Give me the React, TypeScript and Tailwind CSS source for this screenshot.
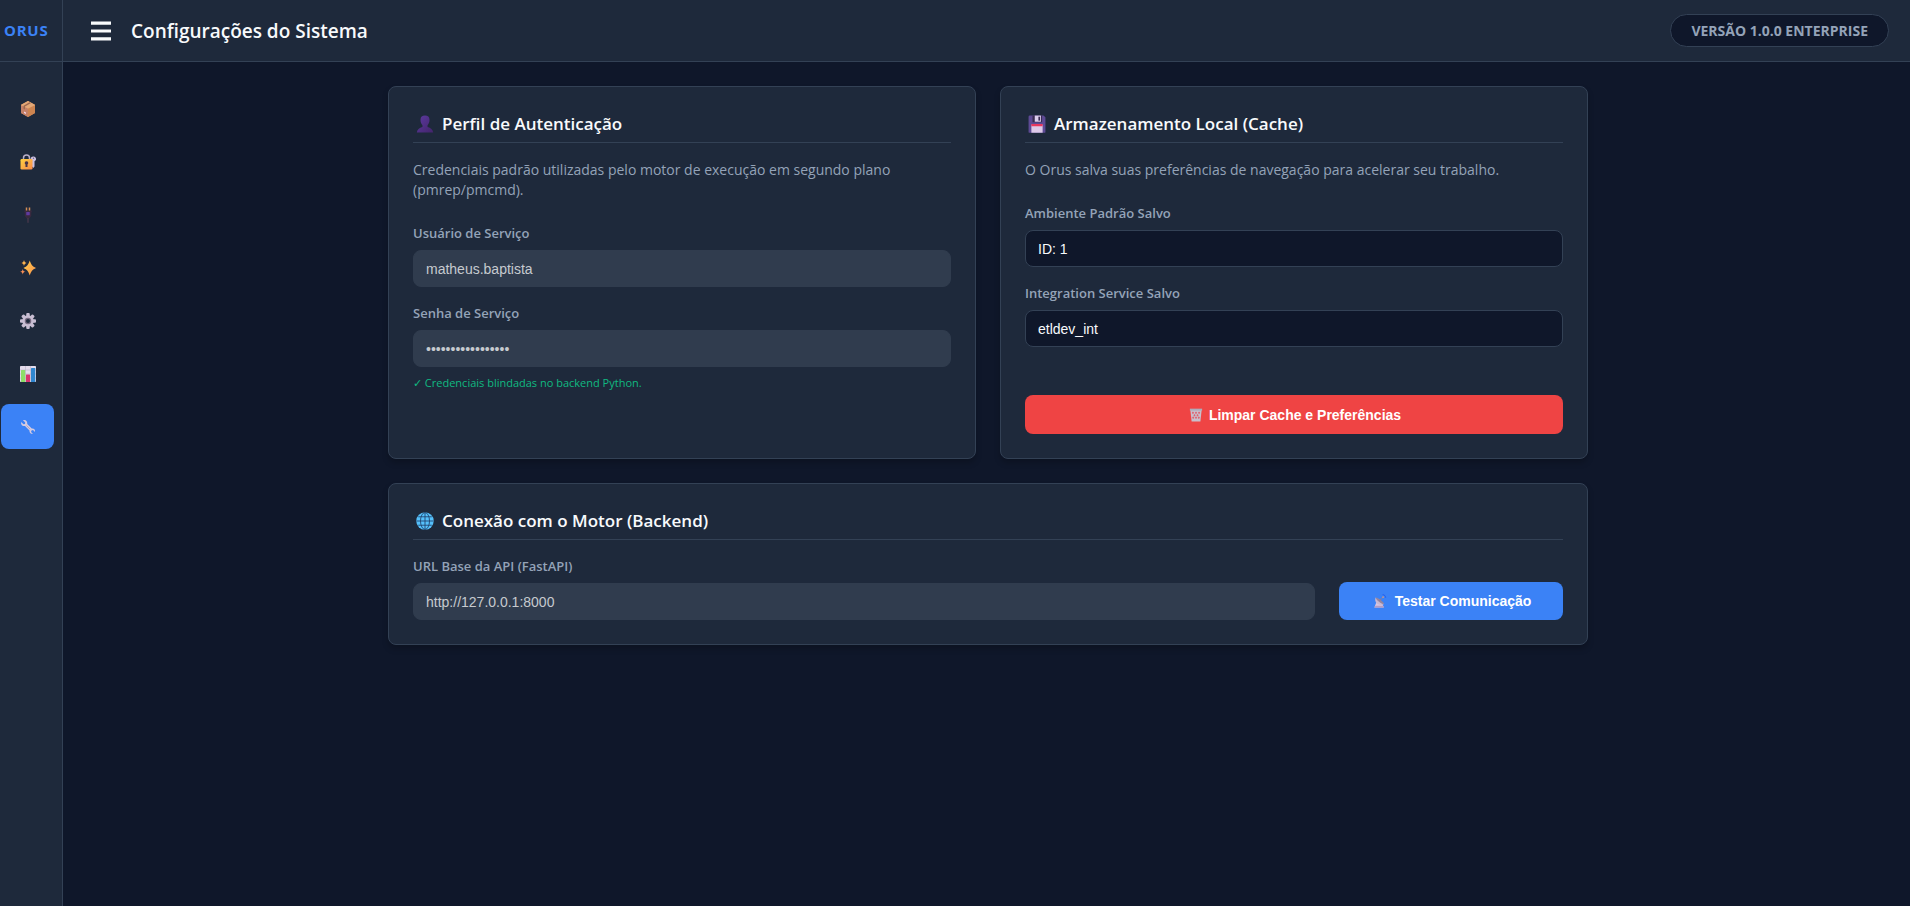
import type { ReactNode } from "react";

type IconProps = { className?: string };

function BoxIcon({ className }: IconProps) {
  return (
    <svg viewBox="0 0 32 32" className={className} aria-hidden="true">
      <path d="M16 0 30 7.500v16.500L16 32 2 24V7.500z" fill="#d9955f" />
      <path d="M2 8.500 16 15v17L2 24z" fill="#c48168" />
      <path d="M30 8.500 16 15v17l14-8z" fill="#cd8450" />
      <path d="M16 0 30 8 16 15 2 8z" fill="#e3a877" />
      <path d="m19 2.500 3 1.500-12 7v6l-3-1.500v-6z" fill="#9c6850" />
      <path d="m8 21 4 2v3l-4-2z" fill="#f3d5e6" />
    </svg>
  );
}

function LockKeyIcon({ className }: IconProps) {
  return (
    <svg viewBox="0 0 32 32" className={className} aria-hidden="true">
      <defs>
        <linearGradient id="lock-body" x1="0" y1="0" x2="1" y2="1">
          <stop offset="0" stopColor="#ffd23f" />
          <stop offset="1" stopColor="#f98a4b" />
        </linearGradient>
      </defs>
      <path d="M7 12V8a6 6 0 0 1 12 0v4" fill="none" stroke="#b8adc6" strokeWidth="3" />
      <path d="M26 5a5 5 0 0 1 3 9.500V25l-2.500 3-2.500-3V14.500A5 5 0 0 1 26 5z" fill="#c9bfe0" />
      <circle cx="27" cy="8.500" r="1.300" fill="#6b5d80" />
      <rect x="1" y="10" width="24" height="21" rx="2.500" fill="url(#lock-body)" />
      <path d="M13 14.500a3.500 3.500 0 0 1 2 6.400V26h-4v-5.100a3.500 3.500 0 0 1 2-6.400z" fill="#4a3548" />
    </svg>
  );
}

function PlugIcon({ className }: IconProps) {
  return (
    <svg viewBox="0 0 32 32" className={className} aria-hidden="true">
      <path d="M11.500 1h3v7h-3zM17.500 1h3v7h-3z" fill="#d08b56" />
      <path d="M8.500 7h15v3.500h-1V18l-4 5h-5l-4-5v-7.500h-1z" fill="#38293f" />
      <rect x="12.500" y="10" width="7" height="6.500" rx="1" fill="#5f3aa0" />
      <path d="M14.500 22h3v9.500h-3z" fill="#44364a" />
    </svg>
  );
}

function SparklesIcon({ className }: IconProps) {
  return (
    <svg viewBox="0 0 32 32" className={className} aria-hidden="true">
      <defs>
        <linearGradient id="spark" x1="0" y1="0" x2="1" y2="1">
          <stop offset="0" stopColor="#ffcf4a" />
          <stop offset="1" stopColor="#f9904d" />
        </linearGradient>
      </defs>
      <path d="M19.500 1c3 8.500 5 11.500 12.500 15-7.500 3.500-9.500 6.500-12.500 15C16.500 22.500 14.500 19.500 7 16c7.500-3.500 9.500-6.500 12.500-15z" fill="url(#spark)" />
      <path d="M8 0c1 4 2 5 5 6-3 1-4 2-5 6-1-4-2-5-5-6 3-1 4-2 5-6z" fill="#f9b04d" />
      <path d="M5.500 18c.9 3.700 1.800 4.600 5.500 5.500-3.700.9-4.600 1.800-5.500 5.500-.9-3.700-1.800-4.600-5.500-5.500 3.700-.9 4.600-1.800 5.500-5.500z" fill="#f98f57" />
    </svg>
  );
}

function GearIcon({ className }: IconProps) {
  return (
    <svg viewBox="0 0 32 32" className={className} aria-hidden="true">
      <g fill="#c8bdd2">
        <rect x="12.500" y="0" width="7" height="32" rx="2" />
        <rect x="12.500" y="0" width="7" height="32" rx="2" transform="rotate(45 16 16)" />
        <rect x="12.500" y="0" width="7" height="32" rx="2" transform="rotate(90 16 16)" />
        <rect x="12.500" y="0" width="7" height="32" rx="2" transform="rotate(135 16 16)" />
        <circle cx="16" cy="16" r="11.500" />
      </g>
      <circle cx="16" cy="16" r="6.500" fill="#75687f" />
      <circle cx="16" cy="16" r="4" fill="#1e293b" />
    </svg>
  );
}

function ChartIcon({ className }: IconProps) {
  return (
    <svg viewBox="0 0 32 32" className={className} aria-hidden="true">
      <rect x="0" y="0" width="32" height="32" rx="1.500" fill="#e4dcec" />
      <path d="M0 8h32M0 16h32M0 24h32M11 0v32M21 0v32" stroke="#b7abc4" strokeWidth="1" />
      <rect x="2" y="8" width="8.500" height="24" rx="1" fill="#8edc68" />
      <rect x="12" y="17" width="8" height="15" rx="1" fill="#d8336f" />
      <rect x="22" y="4" width="8.500" height="28" rx="1" fill="#2f86cf" />
    </svg>
  );
}

function WrenchIcon({ className }: IconProps) {
  return (
    <svg viewBox="0 0 32 32" className={className} aria-hidden="true">
      <path d="M6 2.500 10.500 7 10 10l-3 .5L2.500 6c-1.500 5 2.500 9 7.500 8l9 9c-.5 5 3.500 7.500 7 6.500L22 26l1-3 3-1 4 4c1-4-1.500-7.500-6.500-7l-9-9c1-5-3-9-8.500-7.500z" fill="#d6cbe0" />
      <path d="m13.500 13.500 6.500 6.500" stroke="#a79ab5" strokeWidth="1.500" strokeLinecap="round" />
    </svg>
  );
}

function UserIcon({ className }: IconProps) {
  return (
    <svg viewBox="0 0 32 32" className={className} aria-hidden="true">
      <defs>
        <linearGradient id="bust" x1="0" y1="0" x2="1" y2="1">
          <stop offset="0" stopColor="#5c3aa0" />
          <stop offset="1" stopColor="#43246b" />
        </linearGradient>
      </defs>
      <path d="M16 1c5 0 8 2.500 8 7.500 0 4-1 7.500-3.500 9.500v3.500C26 23 30 26 30.500 31h-29C2 26 6 23 11.500 21.500V18C9 16 8 12.500 8 8.500 8 3.500 11 1 16 1z" fill="url(#bust)" />
    </svg>
  );
}

function FloppyIcon({ className }: IconProps) {
  return (
    <svg viewBox="0 0 32 32" className={className} aria-hidden="true">
      <path d="M3 1h24.500L31 4v26a1.500 1.500 0 0 1-1.500 1.500h-27A1.500 1.500 0 0 1 1 30V3a2 2 0 0 1 2-2z" fill="#5d4a94" />
      <path d="M8 1h17v12H8z" fill="#382a50" />
      <path d="M12 1h11v11H12z" fill="#dccdec" />
      <path d="M18.500 3h3v7h-3z" fill="#382a50" />
      <path d="M6 17h20v14.500H6z" fill="#ddc9e8" />
      <path d="M6 16h20v4H6z" fill="#e8365e" />
    </svg>
  );
}

function GlobeIcon({ className }: IconProps) {
  return (
    <svg viewBox="0 0 32 32" className={className} aria-hidden="true">
      <circle cx="16" cy="16" r="15.500" fill="#55c0fb" />
      <g fill="none" stroke="#1f3f68" strokeWidth="1.500">
        <path d="M1 16h30M16 0.500v31M4 8.500h24M4 23.500h24" />
        <ellipse cx="16" cy="16" rx="8" ry="15" />
      </g>
    </svg>
  );
}

function TrashIcon({ className }: IconProps) {
  return (
    <svg viewBox="0 0 32 32" className={className} aria-hidden="true">
      <path d="M3 4h26l-3 27H6z" fill="#c9bfcc" />
      <g fill="#e0606c">
        <path d="m9 8 2.500 3L9 14l-2.500-3zM16 8l2.500 3-2.500 3-2.500-3zM23 8l2.500 3-2.500 3-2.500-3z" />
        <path d="m12.500 13.500 2.500 3-2.500 3-2.500-3zM19.500 13.500l2.500 3-2.500 3-2.500-3z" />
        <path d="m9.500 19 2.500 3-2.500 3L7 22zM16 19l2.500 3-2.500 3-2.500-3zM22.500 19l2.500 3-2.500 3-2.500-3z" />
      </g>
      <path d="M2 1.500h28v4.500H2z" fill="#aeacba" />
    </svg>
  );
}

function SatelliteIcon({ className }: IconProps) {
  return (
    <svg viewBox="0 0 32 32" className={className} aria-hidden="true">
      <path d="M8 18h11l6 13H3z" fill="#d6c6e2" />
      <path d="M6 27h17l2 4H3z" fill="#b49cc4" />
      <path d="M6 8c-3 7 1 16 11 17 4 .4 7-1 8-2z" fill="#c8b9d2" />
      <path d="M6 8c4-1 18 9 19 15-6 0-18-9-19-15z" fill="#94849e" />
      <path d="m14 16 9-9" stroke="#8c7b94" strokeWidth="2" />
      <circle cx="23" cy="7" r="2" fill="#d19a8a" />
      <path d="M22 1.500c4 0 7 3 7 7" fill="none" stroke="#2458e8" strokeWidth="2" />
    </svg>
  );
}

const navItems = [
  { label: "Pacotes", icon: BoxIcon, active: false },
  { label: "Credenciais", icon: LockKeyIcon, active: false },
  { label: "Conexões", icon: PlugIcon, active: false },
  { label: "Automação", icon: SparklesIcon, active: false },
  { label: "Execução", icon: GearIcon, active: false },
  { label: "Relatórios", icon: ChartIcon, active: false },
  { label: "Configurações", icon: WrenchIcon, active: true },
];

function Card({ title, icon, className = "", children }: { title: string; icon: ReactNode; className?: string; children: ReactNode }) {
  return (
    <section
      className={`flex flex-col rounded-lg border border-[#334155] bg-[#1e293b] p-6 shadow-[0_4px_6px_rgba(0,0,0,0.2)] ${className}`}
    >
      <h2 className="mb-[17px] flex items-center gap-2 border-b border-[#334155] pb-[5px] pl-[3px] text-[17px] leading-[26px] font-semibold text-slate-50">
        {icon}
        {title}
      </h2>
      {children}
    </section>
  );
}

function Field({ id, label, value, type = "text", locked = false }: { id: string; label: string; value: string; type?: string; locked?: boolean }) {
  return (
    <div>
      <label htmlFor={id} className="mb-2 block text-[13px] leading-[17px] font-semibold text-[#94a3b8]">
        {label}
      </label>
      <input
        id={id}
        type={type}
        defaultValue={value}
        readOnly
        className={`block h-[37px] w-full rounded-lg border px-3 font-['Liberation_Sans',Arial,sans-serif] text-sm outline-none ${
          locked ? "border-[#303c4e] bg-[#303c4e] text-[#c6cacf]" : "border-[#334155] bg-[#0f172a] text-slate-50"
        }`}
      />
    </div>
  );
}

export default function App() {
  return (
    <div className="flex min-h-screen bg-[#0f172a] font-['Open_Sans','Noto_Sans',sans-serif] text-slate-50">
      <aside className="flex w-[63px] shrink-0 flex-col border-r border-[#334155] bg-[#1e293b]">
        <div className="flex h-[62px] items-center border-b border-[#334155] pl-1 text-[15px] font-bold tracking-wider text-[#3b82f6]">
          ORUS
        </div>
        <nav className="flex flex-col gap-2 pt-6 pr-2 pl-px">
          {navItems.map(({ label, icon: Icon, active }) => (
            <a
              key={label}
              href="#"
              aria-label={label}
              className={`flex h-[45px] items-center justify-center rounded-lg ${active ? "bg-[#3b82f6]" : ""}`}
            >
              <Icon className="size-4" />
            </a>
          ))}
        </nav>
      </aside>

      <div className="flex min-w-0 flex-1 flex-col">
        <header className="flex h-[62px] shrink-0 items-center justify-between border-b border-[#334155] bg-[#1e293b] pr-[21px] pl-7">
          <div className="flex items-center gap-5">
            <button type="button" aria-label="Menu" className="flex text-slate-50">
              <svg viewBox="0 0 20 20" className="size-5" aria-hidden="true" fill="currentColor">
                <path d="M0 .5h20v3.300H0zM0 8.400h20v3.200H0zM0 16.200h20v3.300H0z" />
              </svg>
            </button>
            <h1 className="text-[19px] leading-7 font-semibold">Configurações do Sistema</h1>
          </div>
          <span className="rounded-full border border-[#334155] bg-[#0f172a] px-5 py-[6px] text-sm leading-[19px] font-bold text-[#94a3b8]">
            VERSÃO 1.0.0 ENTERPRISE
          </span>
        </header>

        <main className="flex-1 py-6 pr-6 pl-[27px]">
          <div className="mx-auto grid max-w-[1200px] grid-cols-2 gap-6">
            <Card title="Perfil de Autenticação" icon={<UserIcon className="size-[18px]" />}>
              <p className="mb-[25px] text-sm leading-5 text-[#94a3b8]">
                Credenciais padrão utilizadas pelo motor de execução em segundo plano{" "}
                <span className="whitespace-nowrap">(pmrep/pmcmd).</span>
              </p>
              <div className="flex flex-col gap-[18px]">
                <Field id="usuario" label="Usuário de Serviço" value="matheus.baptista" locked />
                <Field id="senha" label="Senha de Serviço" value="12345678901234567" type="password" locked />
              </div>
              <p className="mt-2 text-[11px] leading-4 text-[#10b981]">✓ Credenciais blindadas no backend Python.</p>
            </Card>

            <Card title="Armazenamento Local (Cache)" icon={<FloppyIcon className="size-[18px]" />}>
              <p className="mb-[25px] text-sm leading-5 text-[#94a3b8]">
                O Orus salva suas preferências de navegação para acelerar seu trabalho.
              </p>
              <div className="flex flex-col gap-[18px]">
                <Field id="ambiente" label="Ambiente Padrão Salvo" value="ID: 1" />
                <Field id="integration" label="Integration Service Salvo" value="etldev_int" />
              </div>
              <button
                type="button"
                className="mt-12 flex h-[39px] w-full items-center justify-center gap-[6px] rounded-lg bg-[#ef4444] pl-0.5 font-['Liberation_Sans',Arial,sans-serif] text-sm font-bold text-white"
              >
                <TrashIcon className="size-[14px]" />
                Limpar Cache e Preferências
              </button>
            </Card>

            <Card title="Conexão com o Motor (Backend)" icon={<GlobeIcon className="size-[18px]" />} className="col-span-2">
              <div className="flex items-end gap-6 pt-px">
                <div className="min-w-0 flex-1">
                  <Field id="url" label="URL Base da API (FastAPI)" value="http://127.0.0.1:8000" locked />
                </div>
                <button
                  type="button"
                  className="flex h-[38px] w-56 items-center justify-center gap-2 rounded-lg bg-[#3b82f6] pl-0.5 font-['Liberation_Sans',Arial,sans-serif] text-sm font-bold text-white"
                >
                  <SatelliteIcon className="size-[14px]" />
                  Testar Comunicação
                </button>
              </div>
            </Card>
          </div>
        </main>
      </div>
    </div>
  );
}
